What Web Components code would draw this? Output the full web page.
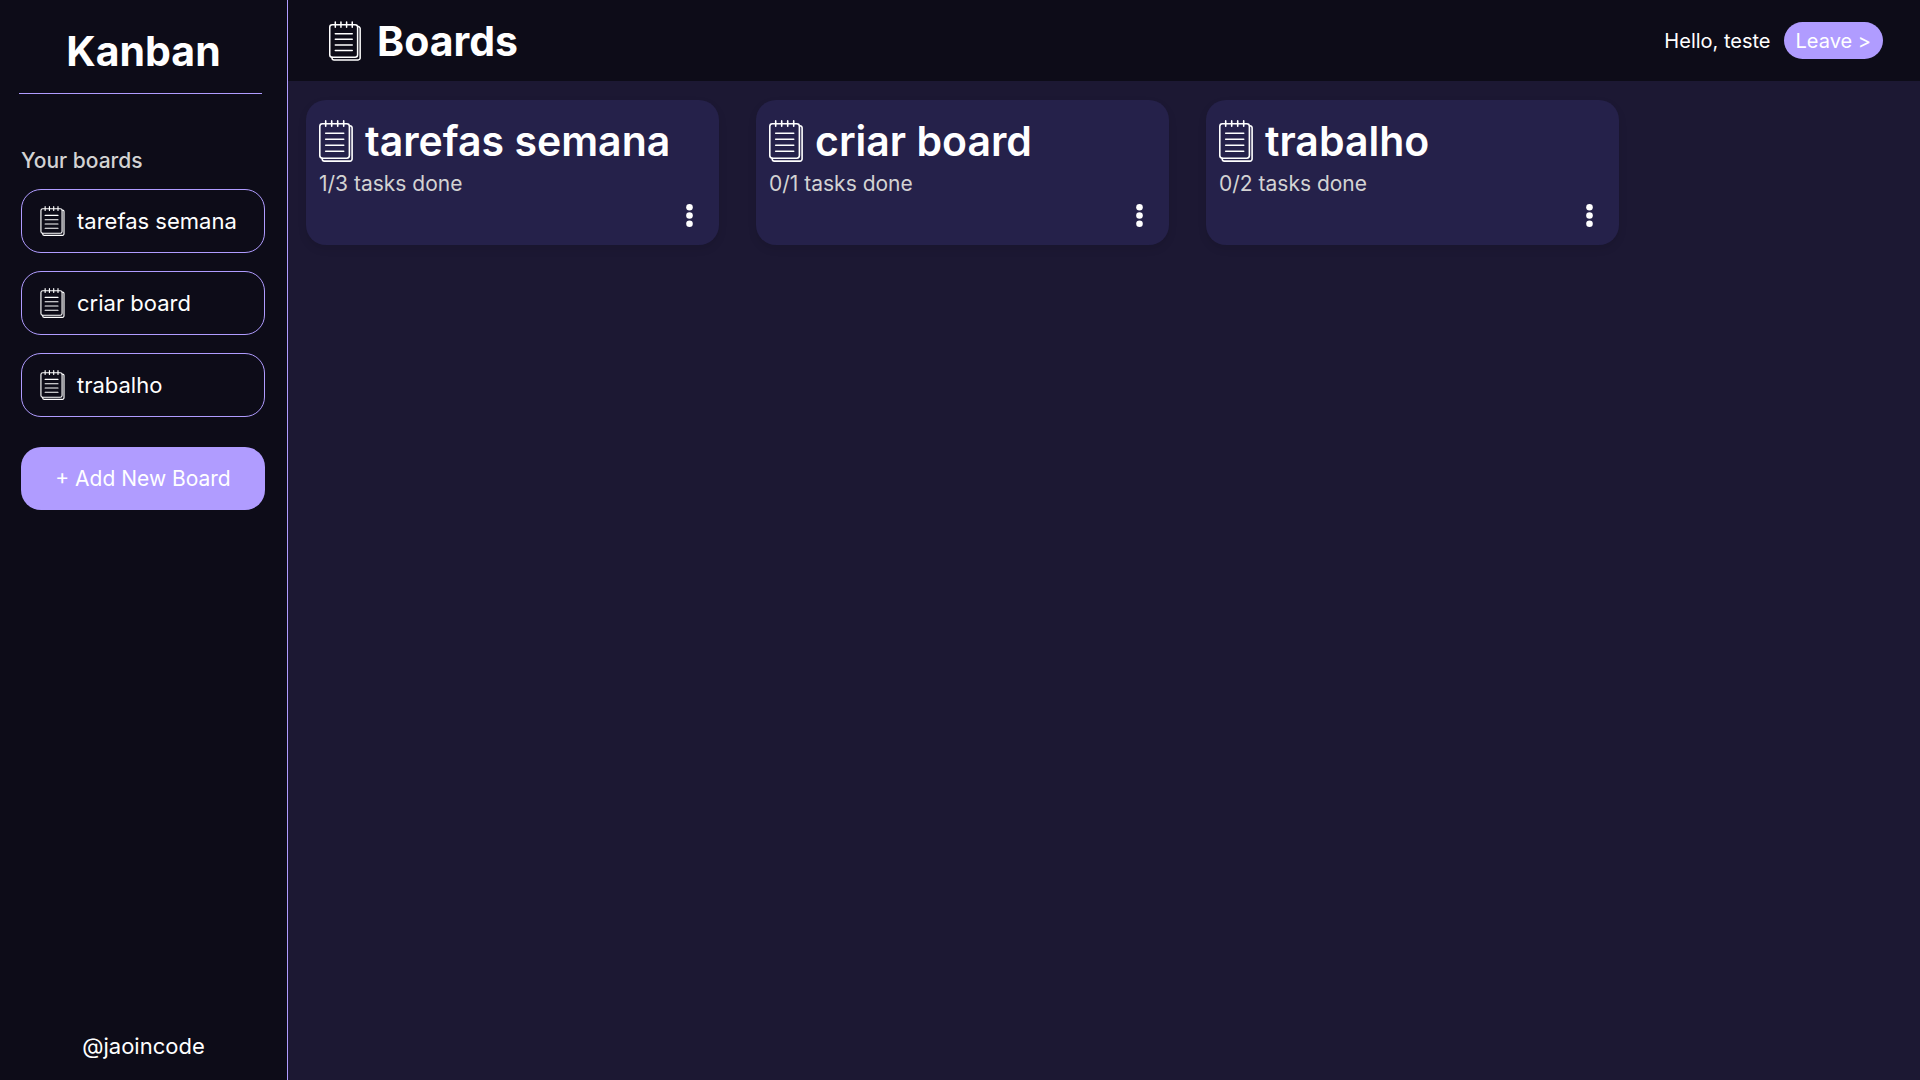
<!DOCTYPE html>
<html lang="en">
<head>
<meta charset="utf-8">
<meta name="viewport" content="width=device-width, initial-scale=1">
<title>Kanban</title>
<style>
  :root {
    --dark: #0d0c18;
    --page: #1c1833;
    --card: #25214a;
    --accent: #b09cff;
    --muted: #d3d3d3;
  }
  body {
    margin: 0;
    background: var(--page);
    color: #fff;
    font: 400 21px/30px Inter, "Open Sans", sans-serif;
  }
</style>
</head>
<body>
<kanban-app>
  <side-bar slot="side" heading="Kanban" author="@jaoincode">
    <board-link>tarefas semana</board-link>
    <board-link>criar board</board-link>
    <board-link>trabalho</board-link>
  </side-bar>
  <top-bar slot="top" user="teste">Boards</top-bar>
  <board-card done="1" total="3">tarefas semana</board-card>
  <board-card done="0" total="1">criar board</board-card>
  <board-card done="0" total="2">trabalho</board-card>
</kanban-app>

<script>
  const define = (name, render) => customElements.define(name, class extends HTMLElement {
    connectedCallback() {
      if (this.shadowRoot) return;
      this.attachShadow({ mode: "open" }).innerHTML = render(this);
    }
  });

  define("note-icon", () => `
    <style>
      :host { display: block; flex: none; width: 34px; height: 42px; }
      svg { display: block; width: 100%; height: 100%; }
    </style>
    <svg viewBox="0 0 34 42" fill="none" stroke="#fff" stroke-width="1.6" stroke-linecap="round" aria-hidden="true">
      <rect x=".8" y="3.8" width="29.6" height="34.4" rx="2.6"/>
      <path d="M30.8 5.7h.2a2.1 2.1 0 0 1 2.1 2.1v31.2a2.1 2.1 0 0 1-2.1 2.1H5.4a2.2 2.2 0 0 1-2.2-2.1v-.6"/>
      <path d="M6.7.9v5.4M12.7.9v5.4M18.7.9v5.4M24.7.9v5.4"/>
      <path d="M6.7 13.2h18M6.7 19.2h18M6.7 25.2h18M6.7 31.2h18"/>
    </svg>`);

  define("kanban-app", () => `
    <style>
      :host { display: grid; grid-template-columns: 288px 1fr; min-height: 100vh; }
      .content { display: flex; flex-direction: column; min-width: 0; }
      main {
        display: grid; grid-template-columns: repeat(auto-fill, 413px);
        gap: 37px; padding: 19px 18px;
      }
    </style>
    <slot name="side"></slot>
    <div class="content">
      <slot name="top"></slot>
      <main><slot></slot></main>
    </div>`);

  define("side-bar", el => `
    <style>
      :host {
        display: flex; flex-direction: column; box-sizing: border-box;
        background: var(--dark); border-right: 1px solid var(--accent);
      }
      h1 {
        margin: 0; padding: 21px 0 12px;
        font-size: 41px; line-height: 60px; font-weight: 700; text-align: center;
      }
      hr { box-sizing: border-box; height: 1px; margin: 0 25px 0 19px; border: 0; background: var(--accent); }
      nav { display: flex; flex-direction: column; gap: 18px; padding: 52px 22px 0 21px; }
      h2 { margin: 0 0 -5px; font-size: 21px; line-height: 30px; font-weight: 500; color: var(--muted); }
      button {
        margin-top: 12px; height: 63px; border: 0; border-radius: 20px;
        background: var(--accent); color: #fff; font: inherit; cursor: pointer;
      }
      footer { margin-top: auto; padding-bottom: 19px; text-align: center; font-size: 22px; }
    </style>
    <h1>${el.getAttribute("heading")}</h1>
    <hr>
    <nav>
      <h2>Your boards</h2>
      <slot></slot>
      <button type="button">+ Add New Board</button>
    </nav>
    <footer>${el.getAttribute("author")}</footer>`);

  define("board-link", () => `
    <style>
      :host { display: block; }
      a {
        display: flex; align-items: center; gap: 12px; box-sizing: border-box;
        height: 64px; padding: 0 18px; border: 1px solid var(--accent); border-radius: 20px;
        color: #fff; text-decoration: none; font-size: 22px; white-space: nowrap;
      }
      note-icon { width: 25px; height: 30px; }
    </style>
    <a href="#"><note-icon></note-icon><slot></slot></a>`);

  define("top-bar", el => `
    <style>
      :host {
        display: flex; align-items: center; justify-content: space-between; box-sizing: border-box;
        height: 81px; padding: 0 37px 0 41px; background: var(--dark);
      }
      .title, .user { display: flex; align-items: center; }
      .title { gap: 16px; }
      .user { gap: 13px; font-size: 20px; }
      note-icon { width: 32px; height: 40px; }
      h1 { margin: 0; font-size: 41px; line-height: 60px; font-weight: 700; }
      button {
        height: 37px; padding: 0 12px; border: 0; border-radius: 20px;
        background: var(--accent); color: #fff; font: inherit; cursor: pointer;
      }
    </style>
    <div class="title"><note-icon></note-icon><h1><slot></slot></h1></div>
    <div class="user"><span>Hello, ${el.getAttribute("user")}</span><button type="button">Leave &gt;</button></div>`);

  define("board-card", el => `
    <style>
      :host {
        display: flex; flex-direction: column; box-sizing: border-box;
        height: 145px; padding: 11px 13px; border-radius: 20px; background: var(--card);
        box-shadow: 0 4px 8px rgba(0, 0, 0, .1);
      }
      header { display: flex; align-items: center; gap: 12px; white-space: nowrap; }
      h2 { margin: 0; font-size: 41px; line-height: 60px; font-weight: 600; }
      p { margin: -2px 0 0; color: var(--muted); }
      button {
        align-self: flex-end; display: block; margin-right: 7px; padding: 0 6px;
        border: 0; background: none; cursor: pointer;
      }
      svg { display: block; }
    </style>
    <header><note-icon></note-icon><h2><slot></slot></h2></header>
    <p>${el.getAttribute("done")}/${el.getAttribute("total")} tasks done</p>
    <button type="button" aria-label="Board options">
      <svg width="7" height="32" fill="#fff" aria-hidden="true">
        <circle cx="3.5" cy="8.2" r="3.3"/><circle cx="3.5" cy="16.5" r="3.3"/><circle cx="3.5" cy="24.8" r="3.3"/>
      </svg>
    </button>`);
</script>
</body>
</html>
